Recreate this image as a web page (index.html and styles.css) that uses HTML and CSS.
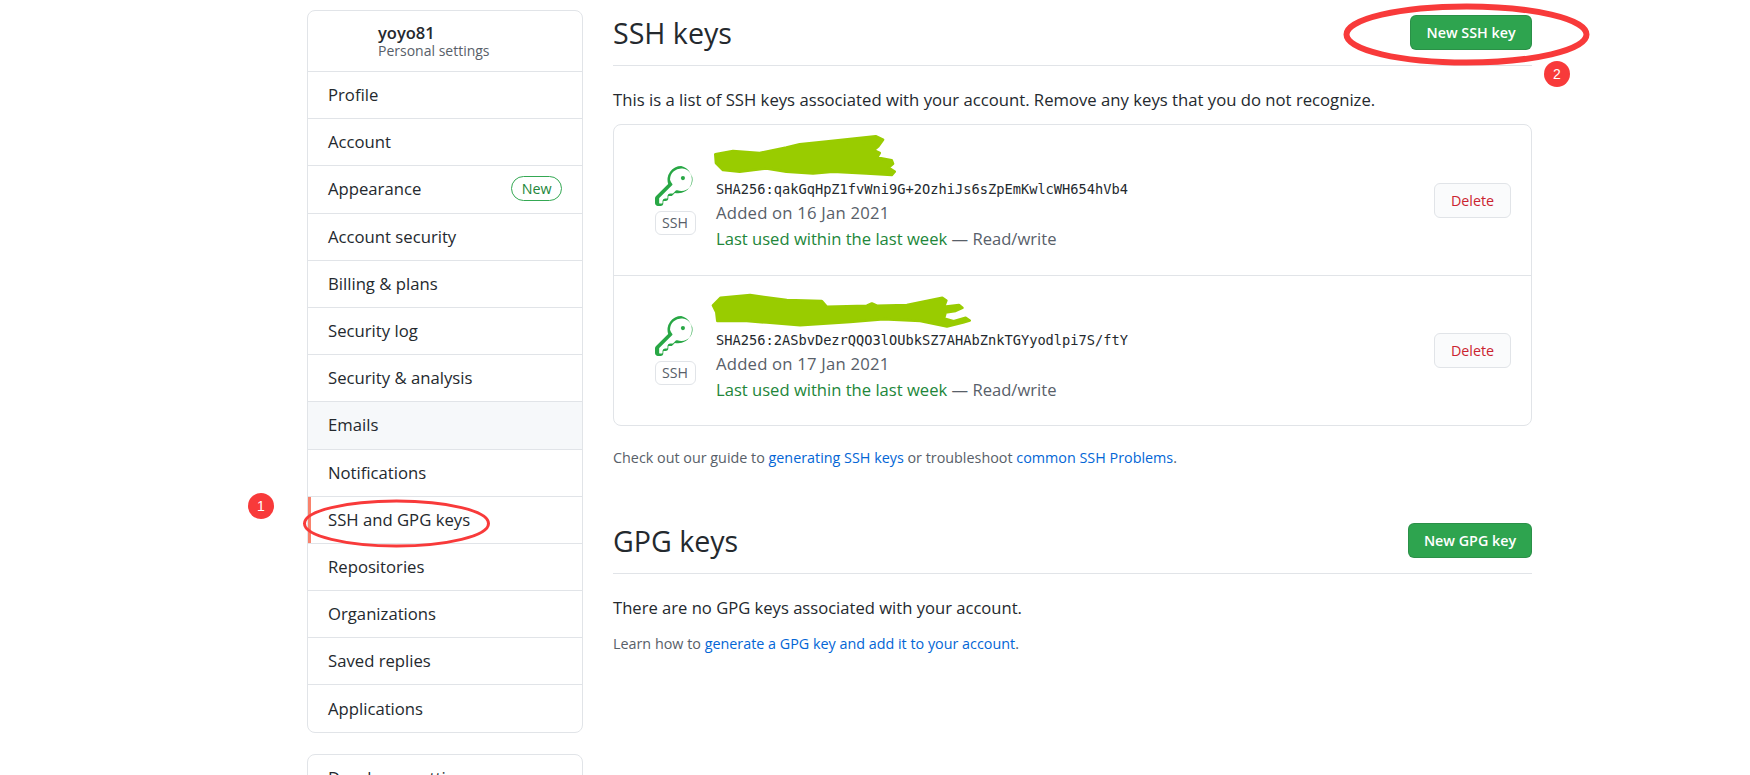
FILE: index.html
```html
<!DOCTYPE html>
<html lang="en">
<head>
    <meta charset="UTF-8">
    <title>SSH and GPG keys</title>
    <link rel="stylesheet" href="styles.css">
</head>
<body>
<div class="page">
    <aside class="sidebar">
        <div class="menu">
            <div class="menu-head">
                <div class="menu-user">yoyo81</div>
                <div class="menu-sub">Personal settings</div>
            </div>
            <a class="menu-item">Profile</a>
            <a class="menu-item">Account</a>
            <a class="menu-item">Appearance <span class="label-new">New</span></a>
            <a class="menu-item">Account security</a>
            <a class="menu-item">Billing &amp; plans</a>
            <a class="menu-item">Security log</a>
            <a class="menu-item">Security &amp; analysis</a>
            <a class="menu-item hovered">Emails</a>
            <a class="menu-item">Notifications</a>
            <a class="menu-item selected">SSH and GPG keys</a>
            <a class="menu-item">Repositories</a>
            <a class="menu-item">Organizations</a>
            <a class="menu-item">Saved replies</a>
            <a class="menu-item">Applications</a>
        </div>
        <div class="menu menu-dev">
            <div class="menu-dev-title">Developer settings</div>
        </div>
    </aside>

    <main class="content">
        <div class="section-head">
            <h2>SSH keys</h2>
            <button class="btn-green btn-ssh">New SSH key</button>
        </div>
        <p class="intro">This is a list of SSH keys associated with your account. Remove any keys that you do not recognize.</p>

        <div class="keys">
            <div class="key-row">
                <div class="key-icon">
                    <svg class="icon-key" viewBox="0 0 24 24"><path d="M16.75 8.5a1.25 1.25 0 100-2.5 1.25 1.25 0 000 2.5z"/><path fill-rule="evenodd" d="M15.75 0a8.25 8.25 0 00-7.851 10.79L.513 18.178A1.75 1.75 0 000 19.414v2.836C0 23.217.784 24 1.75 24h1.5A1.75 1.75 0 005 22.25v-1a.25.25 0 01.25-.25h1a1.75 1.75 0 001.75-1.75v-1a.25.25 0 01.25-.25h1.086c.464 0 .91-.184 1.237-.513l1.338-1.338A8.25 8.25 0 1015.75 0zM9 8.25a6.75 6.75 0 114.32 6.3.75.75 0 00-.809.17l-1.712 1.712a.25.25 0 01-.177.073H9.25A1.75 1.75 0 007.5 18.25v1a.25.25 0 01-.25.25h-1a1.75 1.75 0 00-1.75 1.75v1a.25.25 0 01-.25.25h-1.5a.25.25 0 01-.25-.25v-2.836a.25.25 0 01.073-.177l7.667-7.667a.75.75 0 00.17-.809A6.73 6.73 0 019 8.25z"/></svg>
                    <span class="badge-ssh">SSH</span>
                </div>
                <div class="key-info">
                    <div class="key-title">
                        <svg class="scribble-one" viewBox="340 40 555 135"><path fill-rule="evenodd" d="M347 104L400 94L480 100L560 84L600 74L680 66L828 50L850 60L836 80L822 92L840 100L832 114L876 122L880 132L866 144L885 156L876 166L800 161L700 156L640 161L560 156L500 146L420 156L370 151L349 130ZM745 72L775 72L815 68L785 66Z"/></svg>
                    </div>
                    <div class="key-hash">SHA256:qakGqHpZ1fvWni9G+2OzhiJs6sZpEmKwlcWH654hVb4</div>
                    <div class="key-date">Added on 16 Jan 2021</div>
                    <div class="key-used"><span class="used-green">Last used within the last week</span> — Read/write</div>
                </div>
                <button class="btn-delete">Delete</button>
            </div>
            <div class="key-row">
                <div class="key-icon">
                    <svg class="icon-key" viewBox="0 0 24 24"><path d="M16.75 8.5a1.25 1.25 0 100-2.5 1.25 1.25 0 000 2.5z"/><path fill-rule="evenodd" d="M15.75 0a8.25 8.25 0 00-7.851 10.79L.513 18.178A1.75 1.75 0 000 19.414v2.836C0 23.217.784 24 1.75 24h1.5A1.75 1.75 0 005 22.25v-1a.25.25 0 01.25-.25h1a1.75 1.75 0 001.75-1.75v-1a.25.25 0 01.25-.25h1.086c.464 0 .91-.184 1.237-.513l1.338-1.338A8.25 8.25 0 1015.75 0zM9 8.25a6.75 6.75 0 114.32 6.3.75.75 0 00-.809.17l-1.712 1.712a.25.25 0 01-.177.073H9.25A1.75 1.75 0 007.5 18.25v1a.25.25 0 01-.25.25h-1a1.75 1.75 0 00-1.75 1.75v1a.25.25 0 01-.25.25h-1.5a.25.25 0 01-.25-.25v-2.836a.25.25 0 01.073-.177l7.667-7.667a.75.75 0 00.17-.809A6.73 6.73 0 019 8.25z"/></svg>
                    <span class="badge-ssh">SSH</span>
                </div>
                <div class="key-info">
                    <div class="key-title">
                        <svg class="scribble-two" viewBox="330 65 785 110"><path d="M339 105L362 82L450 74L560 89L665 92L680 109L800 106L815 99L830 106L920 104L1026 82L1038 90L1031 109L1076 104L1086 112L1066 121L1036 126L1031 144L1060 152L1096 142L1108 150L1088 156L1040 168L960 151L850 146L750 154L600 164L500 156L440 151L352 151L349 125Z"/></svg>
                    </div>
                    <div class="key-hash">SHA256:2ASbvDezrQQO3lOUbkSZ7AHAbZnkTGYyodlpi7S/ftY</div>
                    <div class="key-date">Added on 17 Jan 2021</div>
                    <div class="key-used"><span class="used-green">Last used within the last week</span> — Read/write</div>
                </div>
                <button class="btn-delete">Delete</button>
            </div>
        </div>
        <p class="note note-guide">Check out our guide to <a>generating SSH keys</a> or troubleshoot <a>common SSH Problems</a>.</p>

        <div class="section-head section-gpg">
            <h2>GPG keys</h2>
            <button class="btn-green btn-gpg">New GPG key</button>
        </div>
        <p class="intro intro-gpg">There are no GPG keys associated with your account.</p>
        <p class="note">Learn how to <a>generate a GPG key and add it to your account</a>.</p>
    </main>
</div>

<!-- red annotations drawn over the screenshot -->
<svg class="marks" viewBox="0 0 1750 775">
    <ellipse cx="396.5" cy="523.5" rx="92" ry="22.5"/>
    <ellipse class="thick" cx="1466.5" cy="34.5" rx="120" ry="28"/>
</svg>
<span class="mark-num mark-one">1</span>
<span class="mark-num mark-two">2</span>
</body>
</html>
```

FILE: styles.css
```css
body {
    margin: 0;
    height: 775px;
    overflow: hidden;
    position: relative;
    background: #fff;
    color: #24292e;
    font-family: "Open Sans", "Liberation Sans", sans-serif;
    font-size: 16.7px;
}

.page {
    display: flex;
    gap: 30px;
    padding: 10px 0 0 307px;
}

/* Sidebar */
.sidebar {
    width: 276px;
    flex-shrink: 0;
}

.menu {
    border: 1px solid #e1e4e8;
    border-radius: 8px;
    overflow: hidden;
    box-sizing: border-box;
}

.menu-head {
    height: 60px;
    box-sizing: border-box;
    padding: 13px 0 0 70px;
    line-height: 18px;
}

.menu-user {
    font-weight: 600;
    font-size: 16.5px;
}

.menu-sub {
    font-size: 14px;
    color: #586069;
}

.menu-item {
    display: flex;
    align-items: center;
    justify-content: space-between;
    height: 47.2px;
    box-sizing: border-box;
    border-top: 1px solid #e1e4e8;
    padding: 0 20px 1px 20px;
}

.menu-item.hovered {
    background: #f6f8fa;
}

.menu-item.selected {
    box-shadow: inset 3px 0 0 #f9826c;
}

.label-new {
    border: 1px solid #34a853;
    border-radius: 13px;
    color: #22863a;
    font-size: 14.3px;
    line-height: 23px;
    padding: 0 9.5px;
}

.menu-dev {
    margin-top: 21px;
    height: 60px;
    padding: 13px 0 0 20px;
    line-height: 20px;
}

/* Main column */
.content {
    width: 919px;
    flex-shrink: 0;
}

.section-head {
    display: flex;
    align-items: flex-start;
    justify-content: space-between;
    height: 55px;
    border-bottom: 1px solid #e1e4e8;
}

.section-gpg {
    margin-top: 55px;
    height: 50px;
}

h2 {
    margin: 0;
    font-size: 28.6px;
    font-weight: 400;
    line-height: 46px;
}

.section-gpg h2 {
    line-height: 36px;
}

.btn-green {
    height: 35px;
    border: 1px solid rgba(27, 31, 35, 0.15);
    border-radius: 6px;
    background: #2ea44f;
    color: #fff;
    font: 600 14.3px "Open Sans", "Liberation Sans", sans-serif;
}

.btn-ssh {
    width: 122px;
    margin-top: 5px;
}

.btn-gpg {
    width: 124px;
}

.intro {
    margin: 22px 0 0;
    line-height: 24px;
}

.intro-gpg {
    margin-top: 22px;
    font-size: 16.6px;
}

.note {
    margin: 14px 0 0;
    font-size: 14.35px;
    line-height: 20px;
    color: #586069;
}

.note a {
    color: #0366d6;
}

.note-guide {
    margin-top: 22px;
}

/* Keys list */
.keys {
    margin-top: 12px;
    border: 1px solid #e1e4e8;
    border-radius: 8px;
}

.key-row {
    display: flex;
    align-items: center;
    height: 150px;
    padding: 0 20px 0 40px;
}

.key-row + .key-row {
    height: 149px;
    border-top: 1px solid #e1e4e8;
}

.key-icon {
    display: flex;
    flex-direction: column;
    align-items: center;
    width: 42px;
    margin-right: 20px;
    flex-shrink: 0;
}

.icon-key {
    width: 40px;
    height: 40px;
    fill: #28a745;
}

.badge-ssh {
    margin-top: 5px;
    width: 41px;
    height: 24px;
    box-sizing: border-box;
    border: 1px solid #e1e4e8;
    border-radius: 6px;
    text-align: center;
    font-size: 14.2px;
    line-height: 22px;
    color: #586069;
}

.key-info {
    flex: 1;
    align-self: flex-start;
    padding-top: 8px;
}

.key-title {
    display: flex;
    align-items: flex-end;
    height: 45px;
}

.scribble-one,
.scribble-two {
    fill: #99cc00;
    stroke: #99cc00;
    stroke-width: 8;
    stroke-linejoin: round;
}

.scribble-one {
    width: 185px;
    height: 45px;
    margin-left: -3px;
}

.scribble-two {
    width: 262px;
    height: 37px;
    margin-left: -6px;
}

.key-hash {
    font-family: "DejaVu Sans Mono", "Liberation Mono", monospace;
    font-size: 13.7px;
    line-height: 22px;
}

.key-date {
    margin-top: 1px;
    line-height: 24px;
    letter-spacing: 0.2px;
    color: #586069;
}

.key-used {
    margin-top: 2px;
    font-size: 16.6px;
    line-height: 24px;
    color: #586069;
}

.used-green {
    color: #22863a;
}

.btn-delete {
    width: 77px;
    height: 35px;
    border: 1px solid #e1e4e8;
    border-radius: 6px;
    background: #fafbfc;
    color: #cb2431;
    font: 500 14.3px "Open Sans", "Liberation Sans", sans-serif;
    flex-shrink: 0;
}

/* Annotations */
.marks {
    position: absolute;
    left: 0;
    top: 0;
    width: 1750px;
    height: 775px;
    pointer-events: none;
    fill: none;
    stroke: #f83a3a;
    stroke-width: 3;
}

.marks .thick {
    stroke-width: 6;
}

.mark-num {
    position: absolute;
    width: 26px;
    height: 26px;
    border-radius: 50%;
    background: #f83a3a;
    color: #fff;
    font: 14px/26px "Liberation Sans", sans-serif;
    text-align: center;
}

.mark-one {
    left: 248px;
    top: 493px;
}

.mark-two {
    left: 1544px;
    top: 61px;
}
```
